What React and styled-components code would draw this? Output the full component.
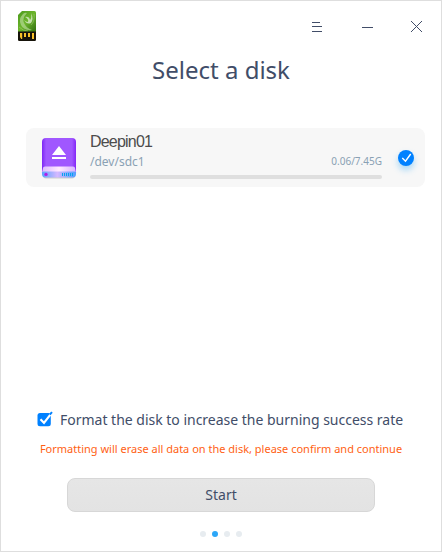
import React from "react";
import styled, { createGlobalStyle } from "styled-components";

const GlobalStyle = createGlobalStyle`
  * { box-sizing: border-box; }
  body { margin: 0; background: #fff; font-family: "Noto Sans", sans-serif; color: #414d68; }
`;

const Window = styled.main`
  width: 442px;
  height: 552px;
  display: flex;
  flex-direction: column;
  background: #fff;
  border: 1px solid #dedede;
`;

const TitleBar = styled.header`
  height: 50px;
  display: flex;
  justify-content: space-between;
  padding: 10px 14px 0 16px;
`;

const Controls = styled.div`
  display: flex;
  gap: 34px;
  padding-top: 8px;
`;

const ControlButton = styled.button`
  width: 16px;
  height: 16px;
  padding: 0;
  border: 0;
  background: none;
  svg { display: block; }
`;

const Title = styled.h1`
  margin: 0;
  height: 38px;
  line-height: 38px;
  text-align: center;
  font-size: 24px;
  font-weight: 400;
`;

const DiskList = styled.section`
  height: 310px;
  padding: 39px 16px 0 25px;
`;

const DiskRow = styled.div`
  height: 59px;
  display: flex;
  border-radius: 8px;
  background: #f7f7f7;
  padding-left: 14px;
  padding-top: 8px;
`;

const DiskInfo = styled.div`
  width: 292px;
  margin-left: 12px;
`;

const DiskName = styled.div`
  height: 17px;
  margin-top: -3px;
  font: 16px/17px "Liberation Sans", sans-serif;
  letter-spacing: -0.8px;
  color: #4c4c4c;
`;

const DiskMeta = styled.div`
  height: 22px;
  display: flex;
  justify-content: space-between;
  align-items: center;
  color: #8aa1b4;
  font-size: 12px;
`;

const Capacity = styled.span`
  font-size: 10px;
`;

const UsageBar = styled.div`
  height: 4px;
  margin-top: 3px;
  border-radius: 2px;
  background: #dfdfdf;
`;

const Selected = styled.span`
  width: 16px;
  height: 16px;
  margin: 14px 0 0 16px;
  border-radius: 50%;
  background: #0081ff;
  box-shadow: 0 4px 6px rgba(44, 167, 248, 0.4);
  svg { display: block; }
`;

const FormatOption = styled.label`
  height: 40px;
  display: flex;
  align-items: center;
  gap: 7px;
  padding-left: 36px;
  font-size: 14px;
  letter-spacing: -0.01px;
  white-space: nowrap;
`;

const Warning = styled.p`
  margin: 0;
  height: 20px;
  line-height: 20px;
  text-align: center;
  font-size: 11px;
  color: #ff5f14;
`;

const StartButton = styled.button`
  width: 308px;
  height: 34px;
  margin: 19px 0 0 66px;
  padding: 0 0 1px;
  border: 1px solid #d7d7d7;
  border-radius: 8px;
  background: linear-gradient(#e6e6e6, #e3e3e3);
  color: #414d68;
  font: 14px "Noto Sans", sans-serif;
`;

const Steps = styled.nav`
  display: flex;
  gap: 6px;
  padding: 19px 0 0 199px;
`;

const Step = styled.span`
  width: 6px;
  height: 6px;
  border-radius: 50%;
  background: ${(p) => (p.$active ? "#2ca7f8" : "#e7ecf0")};
`;

const AppLogo = () => (
  <svg width="20" height="32" viewBox="0 0 20 32">
    <defs>
      <linearGradient id="card" x1="0" y1="0" x2="1" y2="1">
        <stop offset="0" stopColor="#4b9a1c" />
        <stop offset=".5" stopColor="#6db52c" />
        <stop offset="1" stopColor="#2f6d10" />
      </linearGradient>
    </defs>
    <path d="M5 0H17.5Q19 0 19 1.5V21H1V4Z" fill="url(#card)" />
    <path d="M6 3Q1 8 4 14Q7 20 15 19Q9 17 7 12Q5 7 10 2Q8 1 6 3Z" fill="#b5d894" opacity=".7" />
    <path d="M7 9Q10 14 14 12Q17 8 14 2Q15 7 13 9Q12 5 8 6Q12 8 11 11Q9 11 7 9Z" fill="#d5e9c3" opacity=".85" />
    <path d="M17 3Q18 10 14 14M2 16Q6 20 11 20" fill="none" stroke="#a2cf78" strokeWidth=".8" opacity=".7" />
    <path d="M1 20.5H19V28.8Q19 30 17.8 30H2.2Q1 30 1 28.8Z" fill="#16130a" />
    <path d="M3 22h2.2v6H4.2l-1.2-2ZM7 22h2v4H7ZM11 22h2v4h-2ZM15 22h2v6h-2Z" fill="#f8c02a" />
  </svg>
);

const DiskIcon = () => (
  <svg width="38" height="46" viewBox="0 0 38 46">
    <defs>
      <linearGradient id="body">
        <stop stopColor="#7d27f5" />
        <stop offset=".12" stopColor="#a057ff" />
        <stop offset=".88" stopColor="#a057ff" />
        <stop offset="1" stopColor="#8427f7" />
      </linearGradient>
      <linearGradient id="lip">
        <stop stopColor="#dcb8ff" />
        <stop offset=".5" stopColor="#ffeaff" />
        <stop offset="1" stopColor="#d7b2ff" />
      </linearGradient>
      <linearGradient id="base">
        <stop stopColor="#57a4ff" />
        <stop offset=".45" stopColor="#d5b8ff" />
        <stop offset="1" stopColor="#4f9eff" />
      </linearGradient>
    </defs>
    <rect x="3" y="36" width="32" height="6.5" rx="3" fill="#999" opacity=".45" />
    <rect x="2" y="2" width="34" height="37" rx="4" fill="url(#body)" />
    <path d="M3 32Q3 30.5 5 30.5H33Q35 30.5 35 32L36 37H2Z" fill="url(#lip)" />
    <path d="M2 36.5Q2 35.5 4 35.5H34Q36 35.5 36 36.5V38Q36 41.5 32.5 41.5H5.5Q2 41.5 2 38Z" fill="url(#base)" />
    <circle cx="6" cy="38.4" r="1.7" fill="#b01fe6" />
    <path d="M22.5 37v3M24.5 37v3M26.5 37v3M28.5 37v3M30.5 37v3M32.5 37v3" stroke="#07a4ed" />
    <path d="M19 10L26 19H12ZM12 21H26V23H12Z" fill="#fff" />
  </svg>
);

export default function App() {
  return (
    <>
      <GlobalStyle />
      <Window>
        <TitleBar>
          <AppLogo />
          <Controls>
            <ControlButton aria-label="Menu">
              <svg width="16" height="16" stroke="#414d68"><path d="M1 3.5h8M1 7.5h10M1 12.5h10" /></svg>
            </ControlButton>
            <ControlButton aria-label="Minimize">
              <svg width="16" height="16" stroke="#414d68"><path d="M1 8.5h11" /></svg>
            </ControlButton>
            <ControlButton aria-label="Close">
              <svg width="16" height="16" stroke="#414d68" shapeRendering="crispEdges"><path d="M0 2l11 11M11 2L0 13" /></svg>
            </ControlButton>
          </Controls>
        </TitleBar>
        <Title>Select a disk</Title>
        <DiskList>
          <DiskRow>
            <DiskIcon />
            <DiskInfo>
              <DiskName>Deepin01</DiskName>
              <DiskMeta>
                <span>/dev/sdc1</span>
                <Capacity>0.06/7.45G</Capacity>
              </DiskMeta>
              <UsageBar />
            </DiskInfo>
            <Selected>
              <svg width="16" height="16" fill="none" stroke="#fff" strokeWidth="1.4"><path d="M4.3 8l3.2 3.2L12.7 4" /></svg>
            </Selected>
          </DiskRow>
        </DiskList>
        <FormatOption>
          <svg width="16" height="16" viewBox="0 0 16 16">
            <rect x="0.5" y="2" width="13.3" height="13.3" rx="2.5" fill="#0081ff" />
            <path d="M3.5 8.2l3.5 3.7L14 2.8" fill="none" stroke="#fff" strokeWidth="2.2" />
            <path d="M12.8 3.6L15 1.1" stroke="#0081ff" strokeWidth="2" />
          </svg>
          Format the disk to increase the burning success rate
        </FormatOption>
        <Warning>Formatting will erase all data on the disk, please confirm and continue</Warning>
        <StartButton>Start</StartButton>
        <Steps>
          <Step />
          <Step $active />
          <Step />
          <Step />
        </Steps>
      </Window>
    </>
  );
}
